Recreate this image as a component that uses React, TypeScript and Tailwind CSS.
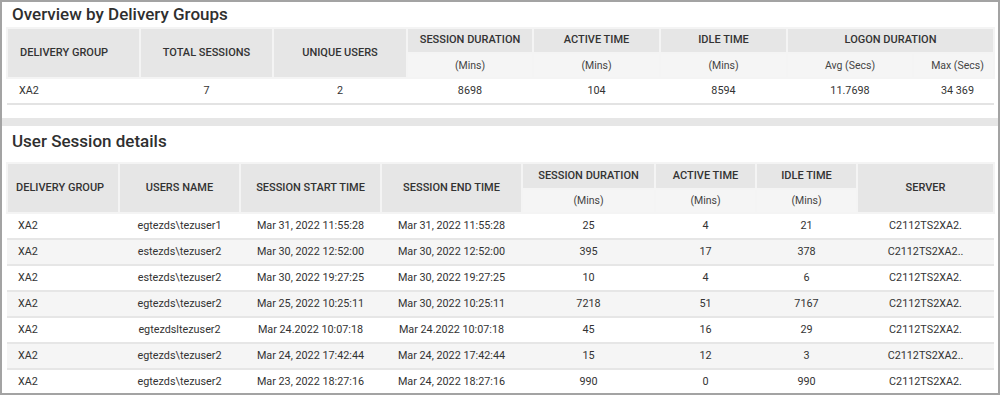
import React from 'react';

const overviewCols = [133, 133, 134, 126, 127, 127, 126, 81];
const sessionCols = [112, 121, 141, 141, 133, 101, 101, 137];

const sessions = [
  ['XA2', 'egtezds\\tezuser1', 'Mar 31, 2022 11:55:28', 'Mar 31, 2022 11:55:28', '25', '4', '21', 'C2112TS2XA2.'],
  ['XA2', 'estezds\\tezuser2', 'Mar 30, 2022 12:52:00', 'Mar 30, 2022 12:52:00', '395', '17', '378', 'C2112TS2XA2..'],
  ['XA2', 'estezds\\tezuser2', 'Mar 30, 2022 19:27:25', 'Mar 30, 2022 19:27:25', '10', '4', '6', 'C2112TS2XA2.'],
  ['XA2', 'egtezds\\tezuser2', 'Mar 25, 2022 10:25:11', 'Mar 30, 2022 10:25:11', '7218', '51', '7167', 'C2112TS2XA2.'],
  ['XA2', 'egtezdsltezuser2', 'Mar 24.2022 10:07:18', 'Mar 24.2022 10:07:18', '45', '16', '29', 'C2112TS2XA2.'],
  ['XA2', 'egtezds\\tezuser2', 'Mar 24, 2022 17:42:44', 'Mar 24, 2022 17:42:44', '15', '12', '3', 'C2112TS2XA2..'],
  ['XA2', 'egtezds\\tezuser2', 'Mar 23, 2022 18:27:16', 'Mar 24, 2022 18:27:16', '990', '0', '990', 'C2112TS2XA2.'],
];

const th = 'bg-[#e6e6e6] border-2 border-[#f4f4f4] font-medium text-[11px] text-[#333] uppercase text-center p-0';
const sub = 'bg-[#f5f5f5] border-2 border-[#f4f4f4] font-normal text-[10.5px] text-[#444] text-center p-0';

const App: React.FC = () => {
  return (
    <div className="w-[1000px] h-[395px] overflow-hidden bg-white border-2 border-[#a3a3a3] font-['Roboto','Noto_Sans',sans-serif] text-[#333]">
      <h1 className="h-[25px] pl-[10px] text-[17px] leading-[24px] font-medium text-[#2f2f2f]">Overview by Delivery Groups</h1>
      <div className="pl-[4px]">
        <table className="table-fixed border-collapse w-[987px]">
          <colgroup>
            {overviewCols.map((w, i) => <col key={i} style={{ width: w }} />)}
          </colgroup>
          <thead>
            <tr className="h-[25px]">
              <th rowSpan={2} className={`${th} text-left pl-[12px]`}>Delivery Group</th>
              <th rowSpan={2} className={th}>Total Sessions</th>
              <th rowSpan={2} className={th}>Unique Users</th>
              <th className={th}>Session Duration</th>
              <th className={th}>Active Time</th>
              <th className={th}>Idle Time</th>
              <th colSpan={2} className={th}>Logon Duration</th>
            </tr>
            <tr className="h-[25px]">
              <th className={sub}>(Mins)</th>
              <th className={sub}>(Mins)</th>
              <th className={sub}>(Mins)</th>
              <th className={sub}>Avg (Secs)</th>
              <th className={`${sub} pl-[8px]`}>Max (Secs)</th>
            </tr>
          </thead>
          <tbody>
            <tr className="h-[26px] border-b-2 border-[#e3e3e3] text-[10.8px] text-[#333]">
              <td className="pl-[12px]">XA2</td>
              <td className="text-center">7</td>
              <td className="text-center">2</td>
              <td className="text-center">8698</td>
              <td className="text-center">104</td>
              <td className="text-center">8594</td>
              <td className="text-center">11.7698</td>
              <td className="text-center pl-[8px]">34 369</td>
            </tr>
          </tbody>
        </table>
      </div>
      <div className="h-[13px]" />
      <div className="h-[8px] bg-[#e6e6e6]" />
      <h2 className="h-[36px] pl-[10px] pt-[5px] text-[17px] leading-[20px] font-medium text-[#2f2f2f]">User Session details</h2>
      <div className="pl-[4px]">
        <table className="table-fixed border-collapse w-[987px]">
          <colgroup>
            {sessionCols.map((w, i) => <col key={i} style={{ width: w }} />)}
          </colgroup>
          <thead>
            <tr className="h-[26px]">
              <th rowSpan={2} className={`${th} text-left pl-[8px]`}>Delivery Group</th>
              <th rowSpan={2} className={th}>Users Name</th>
              <th rowSpan={2} className={th}>Session Start Time</th>
              <th rowSpan={2} className={th}>Session End Time</th>
              <th className={th}>Session Duration</th>
              <th className={th}>Active Time</th>
              <th className={th}>Idle Time</th>
              <th rowSpan={2} className={th}>Server</th>
            </tr>
            <tr className="h-[24px]">
              <th className={sub}>(Mins)</th>
              <th className={sub}>(Mins)</th>
              <th className={sub}>(Mins)</th>
            </tr>
          </thead>
          <tbody>
            {sessions.map((row, i) => (
              <tr key={i} className={`h-[26px] border-b-2 border-[#e6e6e6] text-[10.8px] text-[#333] ${i % 2 === 1 ? 'bg-[#f5f5f5]' : 'bg-white'}`}>
                {row.map((cell, j) => (
                  <td key={j} className={j === 0 ? 'pl-[11px]' : 'text-center'}>{cell}</td>
                ))}
              </tr>
            ))}
          </tbody>
        </table>
      </div>
    </div>
  );
};

export default App;
